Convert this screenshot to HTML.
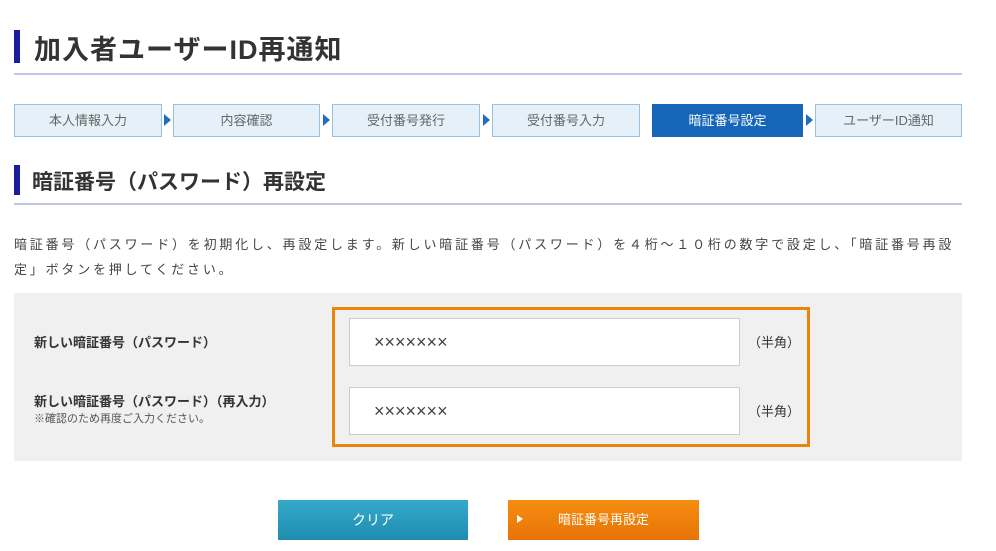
<!DOCTYPE html><html><head><meta charset="utf-8"><style>
*{margin:0;padding:0;box-sizing:border-box}
body{width:996px;height:551px;background:#fff;font-family:"Liberation Sans","Noto Sans CJK JP",sans-serif;color:#333;position:relative;overflow:hidden}
.a{position:absolute}
.h1{left:34px;top:28px;font-size:27px;font-weight:bold;color:#333;letter-spacing:1px}
.bar{background:#1c1f9c;width:6px}
.line{height:2px;background:#c6c3e8;left:14px;width:948px}
.st{top:104px;height:33px;border:1px solid #9cc0dc;background:#e6f0f8;color:#666;font-size:13px;text-align:center;line-height:31px}
.st.on{background:#1566b8;border-color:#1566b8;color:#fff}
.arr{top:114px;width:0;height:0;border-left:7px solid #1e6fc0;border-top:6px solid transparent;border-bottom:6px solid transparent}
.inp{left:349px;width:391px;height:48px;border:1px solid #ccc;background:#fff;font-size:18px;color:#444;padding-left:24px;line-height:46px}
.lbl{left:34px;font-size:13px;font-weight:bold;color:#333}
</style></head><body>
<div class="a bar" style="left:14px;top:30px;height:33px"></div>
<div class="a h1">加入者ユーザーID再通知</div>
<div class="a line" style="top:73px"></div>
<div class="a st" style="left:14px;width:148px">本人情報入力</div>
<div class="a arr" style="left:164px"></div>
<div class="a st" style="left:173px;width:147px">内容確認</div>
<div class="a arr" style="left:323px"></div>
<div class="a st" style="left:332px;width:148px">受付番号発行</div>
<div class="a arr" style="left:483px"></div>
<div class="a st" style="left:492px;width:148px">受付番号入力</div>
<div class="a st on" style="left:652px;width:151px">暗証番号設定</div>
<div class="a arr" style="left:806px"></div>
<div class="a st" style="left:815px;width:147px">ユーザーID通知</div>
<div class="a bar" style="left:14px;top:165px;height:30px"></div>
<div class="a" style="left:32px;top:166px;font-size:21px;font-weight:bold">暗証番号（パスワード）再設定</div>
<div class="a line" style="top:203px"></div>
<div class="a" style="left:14px;top:232px;width:980px;font-size:13px;line-height:25px;color:#444;letter-spacing:2.8px;white-space:nowrap">暗証番号（パスワード）を初期化し、再設定します。新しい暗証番号（パスワード）を４桁～１０桁の数字で設定し、「暗証番号再設<br>定」ボタンを押してください。</div>
<div class="a" style="left:14px;top:293px;width:948px;height:168px;background:#f0f0f0"></div>
<div class="a" style="left:332px;top:307px;width:478px;height:140px;border:3px solid #e8860c"></div>
<div class="a lbl" style="top:332px">新しい暗証番号（パスワード）</div>
<div class="a lbl" style="top:391px">新しい暗証番号（パスワード）（再入力）</div>
<div class="a" style="left:34px;top:410px;font-size:11px;color:#555">※確認のため再度ご入力ください。</div>
<div class="a inp" style="top:318px">×××××××</div>
<div class="a inp" style="top:387px">×××××××</div>
<div class="a" style="left:748px;top:332px;font-size:13px">（半角）</div>
<div class="a" style="left:748px;top:401px;font-size:13px">（半角）</div>
<div class="a" style="left:278px;top:500px;width:190px;height:40px;background:linear-gradient(#35aacb,#1f8cae);color:#fff;font-size:14px;text-align:center;line-height:40px">クリア</div>
<div class="a" style="left:508px;top:500px;width:191px;height:40px;background:linear-gradient(#f68d10,#e87408);color:#fff;font-size:13px;text-align:center;line-height:40px">暗証番号再設定</div>
<div class="a" style="left:517px;top:515px;border-left:6px solid #fff;border-top:4px solid transparent;border-bottom:4px solid transparent"></div>
</body></html>
